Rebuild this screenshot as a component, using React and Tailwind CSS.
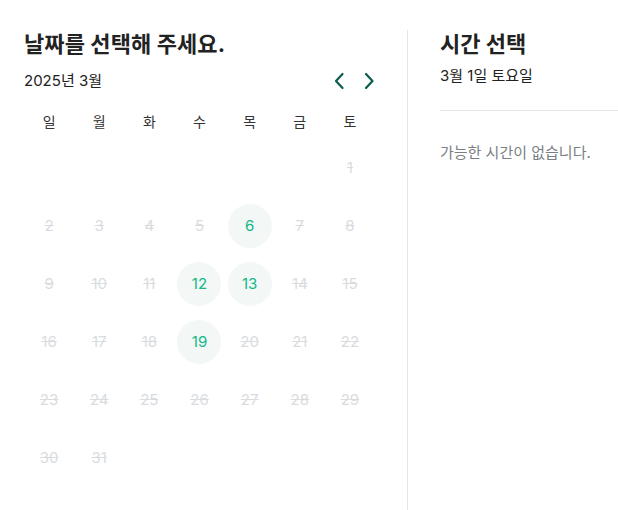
import React from "react";

const font = { fontFamily: 'Inter, "Noto Sans CJK KR", sans-serif' };

const Chevron = ({ dir }) => (
  <svg width="12" height="18" viewBox="0 0 12 18" fill="none">
    {dir === "left" ? (
      <polyline points="9.5,2 3,9 9.5,16" stroke="#0d5c50" strokeWidth="2.2" strokeLinecap="round" strokeLinejoin="round" />
    ) : (
      <polyline points="3,2 9.5,9 3,16" stroke="#0d5c50" strokeWidth="2.2" strokeLinecap="round" strokeLinejoin="round" />
    )}
  </svg>
);

export default function App() {
  const weekdays = ["일", "월", "화", "수", "목", "금", "토"];
  const available = [6, 12, 13, 19];
  const cells = [];
  for (let i = 0; i < 6; i++) cells.push(null);
  for (let d = 1; d <= 31; d++) cells.push(d);

  return (
    <div className="flex w-[618px] h-[510px] overflow-hidden bg-white pl-6 pt-[30px]" style={font}>
      <div className="w-[351px] shrink-0">
        <h1 className="text-[22px] leading-[28px] font-bold text-[#222222] tracking-[0.1px]">날짜를 선택해 주세요.</h1>
        <div className="mt-[11px] flex h-6 items-center justify-between">
          <span className="text-[15px] text-[#222222]">2025년 3월</span>
          <div className="flex items-center gap-[18px] pr-0">
            <Chevron dir="left" />
            <Chevron dir="right" />
          </div>
        </div>
        <div className="mt-[18px] grid grid-cols-7 h-5 items-center">
          {weekdays.map((w) => (
            <div key={w} className="text-center text-[14px] text-[#333333]">{w}</div>
          ))}
        </div>
        <div className="mt-[15px] grid grid-cols-7 gap-y-[14px]">
          {cells.map((d, i) => (
            <div key={i} className="flex h-[44px] items-center justify-center">
              {d !== null &&
                (available.includes(d) ? (
                  <div className="flex h-[44px] w-[44px] items-center justify-center rounded-full bg-[#f3f7f6] text-[15px] text-[#12b886]">
                    {d}
                  </div>
                ) : (
                  <span className="text-[15px] text-[#d9dcdf] line-through">{d}</span>
                ))}
            </div>
          ))}
        </div>
      </div>
      <div className="ml-8 flex-1 border-l border-[#e5e7eb] pl-8">
        <div className="border-b border-[#e5e7eb] pb-[23px]">
          <h2 className="text-[22px] leading-[28px] font-bold text-[#222222]">시간 선택</h2>
          <p className="mt-[7px] text-[15px] leading-[22px] font-normal text-[#222222]">3월 1일 토요일</p>
        </div>
        <p className="mt-8 text-[15px] leading-5 text-[#7a7f85]">가능한 시간이 없습니다.</p>
      </div>
    </div>
  );
}
